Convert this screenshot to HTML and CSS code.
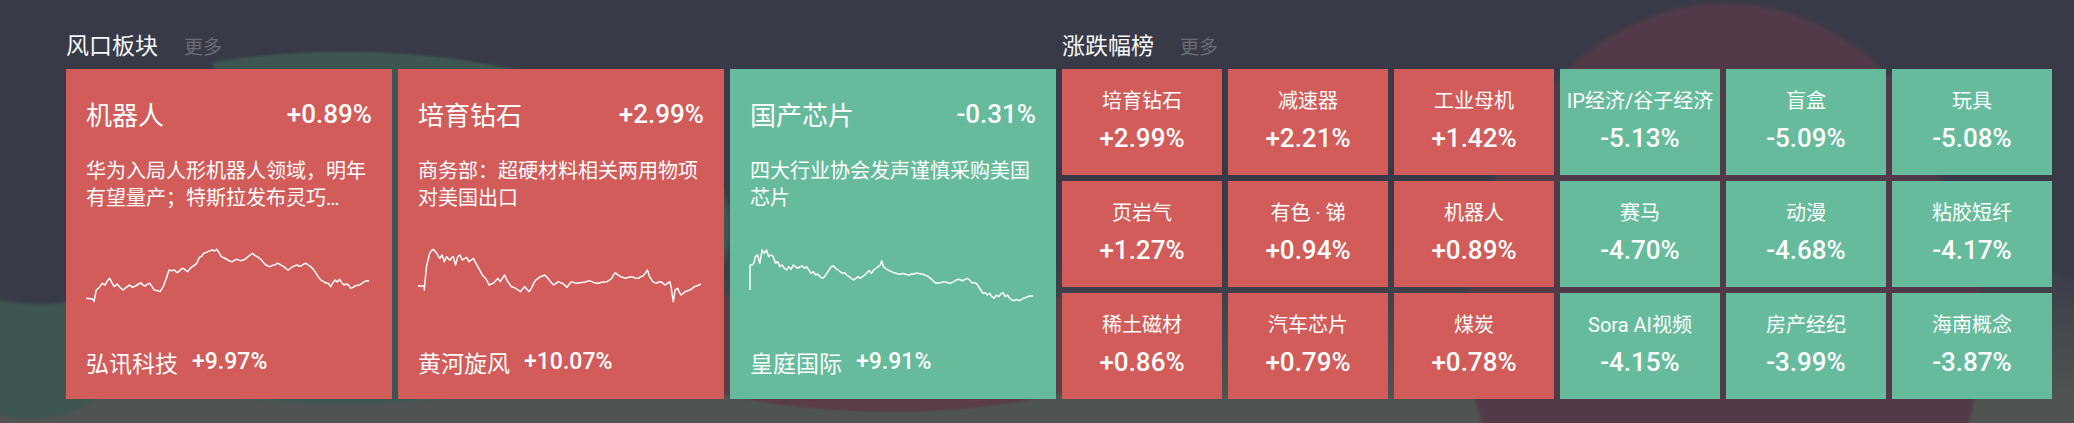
FILE: index.html
```html
<!DOCTYPE html>
<html lang="zh-CN">
<head>
<meta charset="utf-8">
<title>风口板块 / 涨跌幅榜</title>
<link rel="stylesheet" href="styles.css">
</head>
<body>
<div class="page">
  <section class="sec sec-hot">
    <div class="sec-head"><span class="sec-title">风口板块</span><span class="sec-more">更多</span></div>
    <div class="hot-list">
      <div class="hot-card up">
        <div class="hot-top"><span class="hot-name">机器人</span><span class="hot-pct">+0.89%</span></div>
        <p class="hot-desc">华为入局人形机器人领域，明年有望量产；特斯拉发布灵巧…</p>
        <svg class="spark" viewBox="192 735 634 180" preserveAspectRatio="none"><polyline points="192,895 207,897 210,905 215,870 222,862 228,850 235,855 240,842 245,835 250,848 255,860 262,852 268,862 275,870 282,862 290,855 296,862 303,858 310,852 315,848 320,856 325,858 330,852 335,850 340,860 345,870 352,872 358,875 365,860 372,835 378,810 384,812 390,810 396,818 400,815 406,806 410,805 416,812 420,815 425,806 430,800 436,795 440,790 446,772 452,768 455,760 460,758 465,755 470,752 475,750 480,753 485,748 490,758 495,770 502,774 510,780 515,784 520,785 525,780 530,778 538,782 545,780 550,776 555,770 560,765 565,760 570,766 575,770 580,774 585,780 590,788 595,795 600,798 605,800 610,796 615,795 620,790 625,792 630,796 635,800 640,806 645,810 650,805 655,800 660,797 665,795 670,799 675,797 680,792 685,790 690,795 695,800 700,806 705,815 710,826 715,835 720,842 725,845 730,850 735,850 740,860 745,848 750,840 755,846 760,838 765,848 770,855 775,852 780,855 785,865 790,862 795,858 800,856 805,855 810,850 815,845 820,843 826,842"/></svg>
        <div class="hot-foot"><span class="foot-name">弘讯科技</span><span class="foot-pct">+9.97%</span></div>
      </div>
      <div class="hot-card up">
        <div class="hot-top"><span class="hot-name">培育钻石</span><span class="hot-pct">+2.99%</span></div>
        <p class="hot-desc">商务部：超硬材料相关两用物项对美国出口</p>
        <svg class="spark" viewBox="936 735 634 180" preserveAspectRatio="none"><polyline points="936,858 950,858 950,870 955,800 962,760 966,752 970,748 975,755 978,760 982,770 985,775 990,765 995,785 1000,770 1005,778 1008,780 1012,772 1015,770 1020,795 1025,770 1030,765 1035,780 1040,776 1045,772 1050,785 1055,780 1060,775 1065,788 1070,800 1075,812 1080,825 1085,832 1090,840 1095,855 1100,852 1105,850 1110,842 1115,835 1120,845 1125,835 1130,825 1135,840 1140,850 1145,860 1150,862 1155,865 1160,870 1165,875 1170,868 1175,860 1180,868 1185,875 1190,865 1195,850 1200,840 1205,835 1210,830 1215,828 1220,825 1225,832 1230,840 1235,848 1240,855 1245,850 1250,845 1255,848 1260,850 1265,856 1270,862 1275,852 1280,845 1290,850 1300,848 1310,846 1320,842 1330,848 1340,850 1350,846 1360,845 1365,840 1370,835 1374,825 1378,818 1384,825 1390,830 1395,832 1400,835 1408,832 1415,830 1422,834 1430,835 1435,830 1440,828 1445,820 1450,810 1455,830 1462,845 1466,848 1470,850 1475,846 1480,845 1485,850 1490,855 1495,850 1500,845 1503,860 1505,880 1508,905 1512,870 1518,865 1522,878 1525,885 1530,880 1535,875 1540,872 1545,870 1550,866 1555,860 1562,857 1570,852"/></svg>
        <div class="hot-foot"><span class="foot-name">黄河旋风</span><span class="foot-pct">+10.07%</span></div>
      </div>
      <div class="hot-card down">
        <div class="hot-top"><span class="hot-name">国产芯片</span><span class="hot-pct">-0.31%</span></div>
        <p class="hot-desc">四大行业协会发声谨慎采购美国芯片</p>
        <svg class="spark" viewBox="113 735 634 180" preserveAspectRatio="none"><polyline points="113,870 113,795 118,795 122,788 125,770 130,765 135,790 140,750 145,760 150,750 155,770 160,765 165,770 170,790 175,785 180,800 185,795 190,805 195,810 200,800 205,808 210,795 215,800 220,805 225,800 230,798 235,805 240,800 245,810 250,820 255,815 260,825 265,822 270,830 275,835 280,830 285,820 290,810 295,800 300,798 305,805 310,810 315,815 320,820 325,818 330,825 335,830 340,835 345,840 350,835 355,830 360,835 365,830 370,825 375,818 380,812 385,820 390,810 395,805 400,800 405,795 408,782 412,800 420,808 425,812 430,815 435,818 440,820 445,822 450,823 455,820 460,822 465,824 470,825 475,822 480,822 485,820 490,820 495,822 500,822 505,826 510,828 515,832 520,838 525,845 530,850 535,848 540,848 545,846 550,845 555,848 560,850 565,848 570,845 575,840 580,838 585,840 590,842 595,838 600,835 605,840 610,848 615,848 620,850 625,860 630,870 635,880 640,878 645,885 650,880 655,890 660,895 665,885 670,890 675,882 680,878 685,890 690,885 695,895 700,900 705,902 710,898 715,902 720,900 725,895 730,893 735,890 740,888 747,888"/></svg>
        <div class="hot-foot"><span class="foot-name">皇庭国际</span><span class="foot-pct">+9.91%</span></div>
      </div>
    </div>
  </section>

  <section class="sec sec-rank">
    <div class="sec-head"><span class="sec-title">涨跌幅榜</span><span class="sec-more">更多</span></div>
    <div class="rank-grid">
      <div class="cell up"><span class="cell-name">培育钻石</span><span class="cell-pct">+2.99%</span></div>
      <div class="cell up"><span class="cell-name">减速器</span><span class="cell-pct">+2.21%</span></div>
      <div class="cell up"><span class="cell-name">工业母机</span><span class="cell-pct">+1.42%</span></div>
      <div class="cell down"><span class="cell-name">IP经济/谷子经济</span><span class="cell-pct">-5.13%</span></div>
      <div class="cell down"><span class="cell-name">盲盒</span><span class="cell-pct">-5.09%</span></div>
      <div class="cell down"><span class="cell-name">玩具</span><span class="cell-pct">-5.08%</span></div>

      <div class="cell up"><span class="cell-name">页岩气</span><span class="cell-pct">+1.27%</span></div>
      <div class="cell up"><span class="cell-name">有色 · 锑</span><span class="cell-pct">+0.94%</span></div>
      <div class="cell up"><span class="cell-name">机器人</span><span class="cell-pct">+0.89%</span></div>
      <div class="cell down"><span class="cell-name">赛马</span><span class="cell-pct">-4.70%</span></div>
      <div class="cell down"><span class="cell-name">动漫</span><span class="cell-pct">-4.68%</span></div>
      <div class="cell down"><span class="cell-name">粘胶短纤</span><span class="cell-pct">-4.17%</span></div>

      <div class="cell up"><span class="cell-name">稀土磁材</span><span class="cell-pct">+0.86%</span></div>
      <div class="cell up"><span class="cell-name">汽车芯片</span><span class="cell-pct">+0.79%</span></div>
      <div class="cell up"><span class="cell-name">煤炭</span><span class="cell-pct">+0.78%</span></div>
      <div class="cell down"><span class="cell-name">Sora AI视频</span><span class="cell-pct">-4.15%</span></div>
      <div class="cell down"><span class="cell-name">房产经纪</span><span class="cell-pct">-3.99%</span></div>
      <div class="cell down"><span class="cell-name">海南概念</span><span class="cell-pct">-3.87%</span></div>
    </div>
  </section>
</div>
</body>
</html>
```

FILE: styles.css
```css
html, body {
  margin: 0;
  padding: 0;
}

body {
  width: 2074px;
  height: 423px;
  overflow: hidden;
  font-family: Roboto, "Noto Sans CJK SC", sans-serif;
  color: #fff;
  background:
    radial-gradient(circle 255px at 2150px 40px, #383a47 98%, rgba(56,58,71,0) 100%),
    radial-gradient(circle 185px at 40px 122px, #383a47 97%, rgba(56,58,71,0) 100%),
    radial-gradient(ellipse 260px 320px at 1725px 320px, #533a48 98%, rgba(83,58,72,0) 100%),
    radial-gradient(ellipse 250px 68px at 890px 345px, #5a3d46 96%, rgba(90,61,70,0) 100%),
    radial-gradient(ellipse 390px 178px at 345px 228px, #3e5652 98%, rgba(62,86,82,0) 100%),
    radial-gradient(ellipse 110px 90px at 30px 330px, #3e5652 96%, rgba(62,86,82,0) 100%),
    linear-gradient(to bottom, #383a47 0px, #383a47 250px, #4f5351 395px, #4f5351 423px);
}

.page {
  display: flex;
  gap: 6px;
  padding: 0 22px 0 66px;
}

.sec {
  display: flex;
  flex-direction: column;
  width: 990px;
}

.sec-head {
  height: 69px;
  box-sizing: border-box;
  padding-top: 30px;
  display: flex;
  align-items: baseline;
  font-family: "Noto Sans CJK SC", sans-serif;
}

.sec-title {
  font-size: 23px;
  line-height: 28px;
  color: #f6f7fa;
}

.sec-more {
  margin-left: 26px;
  font-size: 19px;
  line-height: 28px;
  color: #6b6d75;
}

.hot-list {
  display: flex;
  gap: 6px;
}

.up { background: #d15c5a; }
.down { background: #65bb9b; }

.hot-card {
  width: 326px;
  height: 330px;
  box-sizing: border-box;
  padding: 27px 20px 0;
  display: flex;
  flex-direction: column;
}

.hot-top {
  height: 36px;
  display: flex;
  align-items: center;
  justify-content: space-between;
}

.hot-name {
  font-family: "Noto Sans CJK SC", sans-serif;
  font-size: 26px;
  line-height: 36px;
}

.hot-pct {
  font-size: 26px;
  font-weight: 500;
  line-height: 36px;
}

.hot-desc {
  margin: 26px 0 0;
  height: 54px;
  font-size: 20px;
  line-height: 27px;
  color: #fff;
}

.spark {
  display: block;
  margin-top: 33px;
  width: 283px;
  height: 60px;
  overflow: visible;
}

.spark polyline {
  fill: none;
  stroke: #fff;
  stroke-width: 1.5;
  stroke-linejoin: round;
  vector-effect: non-scaling-stroke;
}

.hot-foot {
  margin-top: 42px;
  height: 30px;
  display: flex;
  align-items: center;
  line-height: 30px;
}

.foot-name {
  font-family: "Noto Sans CJK SC", sans-serif;
  font-size: 23px;
}

.foot-pct {
  margin-left: 14px;
  font-size: 23px;
  font-weight: 500;
}

.rank-grid {
  display: grid;
  grid-template-columns: repeat(6, 160px);
  grid-auto-rows: 106px;
  gap: 6px;
}

.cell {
  display: flex;
  flex-direction: column;
  align-items: center;
  box-sizing: border-box;
  padding-top: 18px;
}

.cell-name {
  font-size: 20px;
  line-height: 28px;
  white-space: nowrap;
}

.cell-pct {
  margin-top: 7px;
  font-size: 26px;
  font-weight: 500;
  line-height: 32px;
}
```
